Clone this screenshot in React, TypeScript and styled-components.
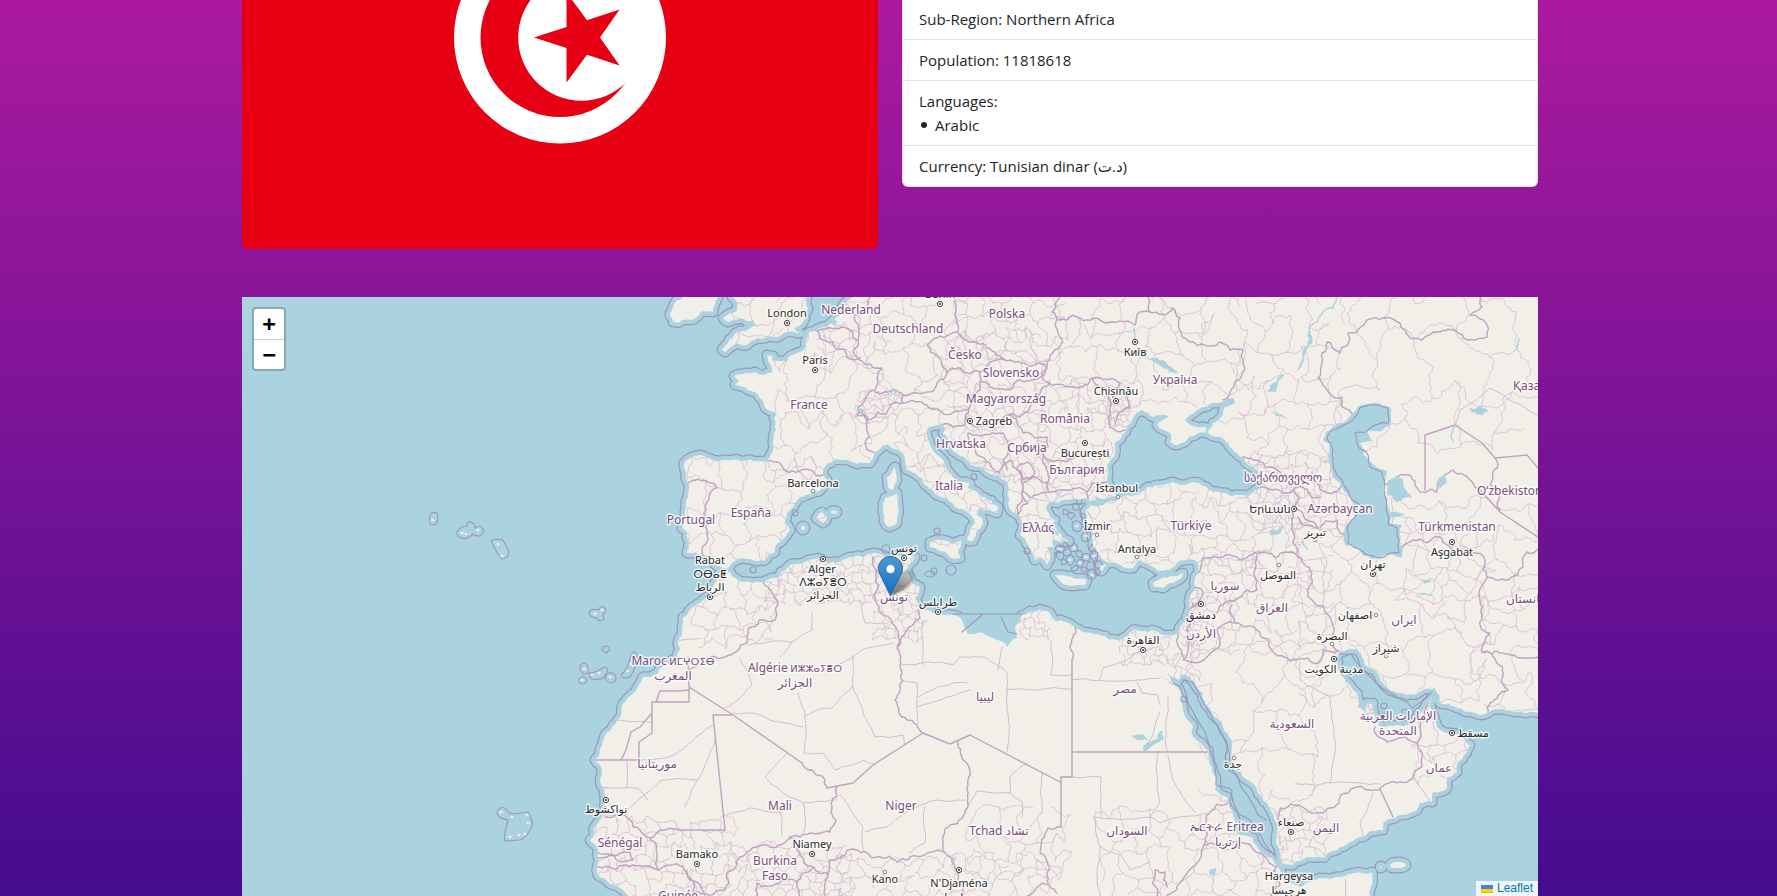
import React from 'react';
import styled, { createGlobalStyle } from 'styled-components';

const GlobalStyle = createGlobalStyle`
  *, *::before, *::after { box-sizing: border-box; }
  body {
    margin: 0;
    color: #212529;
    font-family: 'Segoe UI', 'Open Sans', 'DejaVu Sans', sans-serif;
    font-size: 15px;
    line-height: 24px;
  }
`;

const Page = styled.main`
  min-height: 100vh;
  padding-left: 3px;
  background: linear-gradient(#ab1a9e, #450c8f);
`;

const Container = styled.div`
  display: flex;
  flex-direction: column;
  gap: 48px;
  max-width: 1320px;
  margin: 0 auto;
  padding: 0 12px;
`;

const Columns = styled.section`
  display: grid;
  grid-template-columns: 1fr 1fr;
  gap: 24px;
  align-items: start;
`;

const Flag = styled.svg`
  display: block;
  width: 100%;
  border-radius: 0 0 6px 6px;
`;

const Facts = styled.ul`
  margin: 0;
  padding: 0;
  list-style: none;
  background: #fff;
  border: 1px solid #dee2e6;
  border-top: 0;
  border-radius: 0 0 6px 6px;
`;

const Fact = styled.li`
  padding: 8px 16px;
  & + & { border-top: 1px solid #dee2e6; }
  &:first-child { padding-top: 7px; }
`;

const Languages = styled.ul`
  margin: 0;
  padding: 0;
  list-style: none;
`;

const Language = styled.li`
  display: flex;
  align-items: center;
  gap: 8px;
  padding-left: 2px;
  &::before {
    content: '';
    width: 6px;
    height: 6px;
    border-radius: 50%;
    background: currentColor;
  }
`;

const MapFrame = styled.section`
  position: relative;
  overflow: hidden;
  background: #aad3df;
`;

const MapDrawing = styled.svg`
  display: block;
  width: 100%;
  font-family: 'Noto Sans', 'DejaVu Sans', sans-serif;
`;

const ZoomControl = styled.div`
  position: absolute;
  top: 10px;
  left: 10px;
  display: flex;
  flex-direction: column;
  border: 2px solid rgba(0, 0, 0, 0.2);
  border-radius: 4px;
  background: #fff;
  background-clip: padding-box;
`;

const ZoomButton = styled.button`
  width: 30px;
  height: 30px;
  padding: 0;
  border: 0;
  background: none;
  color: #000;
  font: bold 22px/28px 'DejaVu Sans Mono', monospace;
  cursor: pointer;
  & + & { border-top: 1px solid #ccc; }
`;

const Attribution = styled.div`
  position: absolute;
  right: 0;
  bottom: 0;
  padding: 0 5px;
  background: rgba(255, 255, 255, 0.8);
  font: 12px/15px 'Liberation Sans', Arial, sans-serif;
`;

const AttributionLink = styled.a`
  display: flex;
  align-items: center;
  gap: 4px;
  color: #0078a8;
  text-decoration: none;
`;

const Label = styled.text<{ $kind: 'country' | 'city' }>`
  font-size: ${(p) => (p.$kind === 'country' ? 12 : 11)}px;
  fill: ${(p) => (p.$kind === 'country' ? '#7a4f7c' : '#2b2b2b')};
  stroke: rgba(255, 255, 255, 0.75);
  stroke-width: 3px;
  stroke-linejoin: round;
  paint-order: stroke;
`;

const Tifinagh = styled.tspan`
  font-size: 10px;
`;

/* ---------- line work ---------- */

type Pt = [number, number];

const parse = (s: string): Pt[] =>
  s.trim().split(/\s+/).map((p) => p.split(',').map(Number) as Pt);

const noise = (x: number, y: number) => {
  const s = Math.sin(x * 12.9898 + y * 78.233) * 43758.5453;
  return s - Math.floor(s) - 0.5;
};

/* Roughens a segment; very long ones are frame edges and stay straight. */
const fracture = (a: Pt, b: Pt, amp: number): Pt[] => {
  const dx = b[0] - a[0];
  const dy = b[1] - a[1];
  const length = Math.hypot(dx, dy);
  if (amp === 0 || length < 4 || length > 180) return [b];
  const n = noise(a[0] + b[0], a[1] + b[1]) * amp;
  const mid: Pt = [(a[0] + b[0]) / 2 - dy * n, (a[1] + b[1]) / 2 + dx * n];
  return [...fracture(a, mid, amp), ...fracture(mid, b, amp)];
};

const line = (s: string | Pt[], amp = 0.4) => {
  const pts = typeof s === 'string' ? parse(s) : s;
  const out: Pt[] = [pts[0]];
  for (let i = 1; i < pts.length; i++) out.push(...fracture(pts[i - 1], pts[i], amp));
  return 'M' + out.map((p) => p[0].toFixed(1) + ' ' + p[1].toFixed(1)).join('L');
};

/* Irregular brick-like cells used for provinces and districts. */
const mesh = (x0: number, y0: number, x1: number, y1: number, cell: number) => {
  const node = (k: number, j: number): Pt => {
    const x = x0 + (k * cell) / 2;
    const y = y0 + j * cell * 0.85;
    return [x + noise(x, y) * cell * 0.5, y + noise(y, x) * cell * 0.75];
  };
  const cols = Math.round(((x1 - x0) / cell) * 2);
  const rows = Math.round((y1 - y0) / (cell * 0.85));
  let d = '';
  for (let j = 0; j <= rows; j++)
    for (let k = 0; k <= cols; k++) {
      if (k < cols && noise(k, j * 7 + x0) > -0.42) d += line([node(k, j), node(k + 1, j)], 0.5);
      if (j < rows && (k + j) % 2 === 0) d += line([node(k, j), node(k, j + 1)], 0.5);
    }
  return d;
};

const mainland = line(
  `853,290 853,297 843,305 840,315 832,322 827,327 817,329 808,333 806,340 806,347 797,353 788,358 787,362 773,361
  773,356 767,355 771,365 772,373 762,375 755,372 745,373 734,376 739,381 735,385 748,390 755,392 760,398 764,405
  768,410 777,413 774,418 776,430 773,440 772,453 768,461 753,461 733,460 707,458 700,455 690,458 684,463 686,472
  688,483 688,497 685,513 682,528 687,533 687,553 703,555 712,561 717,566 727,568 735,561 750,559 767,558 775,552
  778,543 785,537 790,530 785,523 787,513 795,503 813,493 823,487 827,480 823,472 828,463 843,460 857,464 870,463
  875,453 888,444 898,450 905,460 907,470 922,478 932,490 947,498 955,507 968,513 975,523 970,530 967,540 973,541
  978,530 983,523 982,518 977,515 980,507 990,510 997,513 998,507 983,497 968,488 970,483 958,482 950,473 945,463
  940,457 930,445 927,437 928,428 942,423 945,428 943,433 950,447 967,460 983,468 1000,477 1008,487 1008,503
  1015,513 1023,523 1020,535 1028,545 1032,552 1035,560 1040,557 1047,565 1050,553 1047,547 1055,548 1052,540
  1063,542 1058,532 1052,525 1055,520 1048,512 1046,507 1050,502 1058,503 1063,500 1073,498 1087,498 1090,502
  1097,498 1110,497 1117,496 1110,487 1107,478 1107,467 1114,457 1115,443 1122,435 1127,427 1133,418 1142,410
  1148,413 1153,417 1170,416 1160,422 1157,425 1170,433 1170,442 1178,445 1188,438 1205,433 1207,428 1190,425
  1185,420 1190,415 1203,407 1223,402 1233,398 1235,402 1225,407 1223,415 1213,423 1207,432 1217,437 1230,447
  1243,457 1257,470 1260,480 1258,490 1248,496 1240,495 1223,493 1210,490 1193,482 1173,482 1157,485 1140,493
  1123,496 1118,500 1103,505 1090,505 1085,512 1087,523 1092,533 1093,547 1100,555 1107,562 1120,565 1133,568
  1140,560 1153,567 1170,570 1185,560 1197,562 1198,573 1195,587 1190,607 1183,623 1178,633 1163,635 1152,630
  1133,630 1120,640 1100,635 1075,628 1055,621 1050,613 1030,611 1020,617 1015,627 1017,638 1007,647 997,640
  967,633 962,620 953,615 933,613 920,608 915,598 920,587 912,583 907,570 915,557 907,555 887,558 873,553
  853,557 823,560 803,563 787,568 777,578 763,582 750,582 733,577 727,571 720,573 715,583 710,596 700,603
  690,610 683,617 682,627 678,642 680,650 670,663 658,673 642,678 635,692 625,702 618,720 608,732 602,745
  595,760 602,770 603,787 605,803 600,820 593,837 590,840 597,847 598,857 597,868 600,877 613,885 623,890
  633,897 640,912 1370,912 1370,897 1372,872 1362,873 1340,877 1313,880 1300,887 1290,883 1283,877 1278,867
  1270,857 1257,847 1253,838 1237,833 1233,817 1227,797 1215,790 1213,773 1208,750 1193,737 1193,727 1183,710
  1173,683 1160,660 1157,653 1163,663 1178,680 1184,663 1182,675 1190,677 1203,693 1212,713 1227,733 1232,747
  1233,767 1252,783 1262,797 1272,813 1277,833 1278,847 1282,863 1293,865 1310,857 1337,850 1363,837 1383,830
  1383,823 1403,815 1417,810 1420,803 1432,802 1433,792 1447,788 1447,778 1457,772 1458,762 1470,745 1463,738
  1450,733 1437,727 1432,713 1433,695 1427,703 1417,717 1407,725 1380,727 1375,717 1373,703 1367,703 1365,712
  1358,707 1357,693 1343,677 1337,660 1340,652 1357,648 1368,667 1383,683 1407,695 1435,688 1440,703 1457,708
  1488,713 1517,712 1550,712 1550,290`,
  0.3,
) + 'Z';

const blob = (x: number, y: number, rx: number, ry = rx) =>
  `M${x - rx} ${y}a${rx} ${ry} 0 1 0 ${rx * 2} 0a${rx} ${ry} 0 1 0 ${-rx * 2} 0Z`;

const islands = [
  '807,290 807,297 808,308 805,318 802,324 794,328 800,333 773,337 753,340 747,345 737,343 725,352 722,350 733,337 740,331 757,325 753,320 728,322 723,318 737,310 738,303 732,297 732,290',
  '683,290 683,297 673,307 670,313 673,322 690,320 713,312 718,297 718,290',
  '895,467 887,477 888,487 893,490 897,480',
  '897,493 885,498 883,503 885,523 890,527 897,523 898,507',
  '816,518 822,512 827,518 823,523',
  '930,542 940,540 961,540 958,553 960,558 950,557 940,551 930,547',
  '1055,575 1062,575 1073,578 1087,580 1085,585 1060,581',
  '1153,583 1167,578 1183,573 1173,583 1163,588 1154,587',
  '1051,528 1058,532 1069,541 1064,540 1055,534',
  '1100,566 1106,564 1101,571',
].map((s) => line(s, 0.35) + 'Z').join('');

const islets = [[834, 512, 3, 1.5], [803, 528, 2, 2], [1398, 865, 8, 3], [1381, 867, 1, 1], [1393, 867, 2, 1]]
  .map(([x, y, a, b]) => blob(x, y, a, b)).join('');

const coast = mainland + islands + islets;

const aegeanRings = ([
  [1076, 507, 4], [1083, 516, 3], [1077, 526, 5], [1071, 516, 3], [1090, 524, 3], [1086, 536, 5], [1066, 512, 3],
  [1060, 549, 4], [1067, 553, 4], [1074, 548, 4], [1079, 554, 4], [1070, 560, 5], [1080, 563, 4], [1086, 557, 4],
  [1064, 562, 3], [1092, 548, 3], [1094, 556, 4], [1090, 565, 4], [1098, 564, 4], [1075, 568, 3], [1084, 570, 3],
  [1060, 556, 4], [1092, 575, 5], [1079, 501, 3], [1097, 572, 3], [1065, 545, 3],
] as [number, number, number][]).map(([x, y, r]) =>
  line(
    Array.from({ length: 9 }, (_, i): Pt => {
      const a = (i * Math.PI) / 4;
      const k = i % 8;
      return [x + Math.cos(a) * (r + noise(x + k, y) * 2), y + Math.sin(a) * (r + noise(x + k, y) * 2)];
    }),
    0.2,
  ) + 'Z',
);

/* Territorial-water rings of the small archipelagos. */
const archipelagoRings = [
  'M430 515q2-4 7-2q2 6-1 11q-6 3-7-3z',
  'M457 532q4-6 10-6q0-5 4-4q4 1 4 6q5-4 8 1q2 5-4 7q-5 0-6-2q-6 6-12 4q-5-2-4-6z',
  'M491 541q2-3 12-1l6 11q0 8-7 8q-3-2-11-18z',
  'M589 612q2-4 10-2q1-5 5-3q4 4-1 7l1 5q-3 4-8-1q-7-1-7-6z',
  'M602 650q1-6 7-3q2 3-3 6z',
  'M580 666q4-6 8 0q2 8-4 8q-4-2-4-8z',
  'M579 679q4-5 8 0q0 5-5 5q-4-1-3-5z',
  'M589 673q7 0 15-6q6 1 2 7q-3 6-8 5q-9 2-9-6z',
  'M605 678q4-9 10-3q3 6-3 8q-6 0-7-5z',
  'M621 675q7-6 10-20q3-6 6 0q0 12-7 22q-8 3-9-2z',
  'M497 812q4-7 9-3q3 5 8 5l14-2q5 8 4 14q-6 13-12 14l-15 1q-2-4 3-21q-12-2-11-8z',
  blob(924, 558, 3), blob(951, 570, 5), blob(930, 574, 5, 3), blob(934, 571, 3), blob(795, 513, 3), blob(753, 570, 3),
  blob(974, 477, 3), blob(1027, 551, 3), blob(1184, 699, 3), blob(937, 531, 3), blob(1384, 706, 3), blob(1384, 715, 2),
  blob(1405, 712, 3), blob(886, 549, 4),
];

const caspian = line(
  `1373,403 1390,407 1390,425 1367,432 1373,442 1360,443 1372,463 1387,472 1383,487 1388,507 1390,523 1402,525
  1402,557 1373,559 1357,548 1345,545 1345,527 1355,517 1353,503 1340,483 1330,463 1330,443 1323,440 1332,427
  1353,413 1363,405`,
  0.3,
) + 'Z';

const lakes = [
  '1388,483 1400,478 1403,488 1411,498 1397,502 1388,495',
  '1388,512 1404,514 1393,518', '1470,408 1480,406 1488,411 1482,415 1472,412', '1455,424 1453,442 1451,438',
  '1437,483 1444,477 1446,483 1440,488', '1270,531 1283,526 1278,534 1271,535', '1302,538 1308,550 1303,545',
  '1312,338 1308,346 1309,332', '1298,370 1304,359 1308,346',
  '1268,391 1276,382 1284,374 1277,386 1276,391', '1146,357 1160,361 1168,366 1178,372 1163,367',
  '1272,412 1282,415 1286,418', '1133,736 1140,735 1148,740 1138,740',
  '1144,752 1148,742 1158,739 1162,731 1163,739 1154,744', '1210,870 1216,868 1214,876 1210,874',
  '951,858 956,857 954,862', '837,322 828,324 832,318', '838,890 841,888 840,897',
  '858,410 864,410 862,413', '893,389 898,391 895,393', '1517,345 1519,338 1517,350',
  '1060,497 1070,493', '1423,580 1431,581 1424,583', '1419,594 1432,595',
].map((s) => line(s, 0.5) + 'Z').join('');

const rivers = line('1338,297 1333,308 1320,316 1312,325 1309,335', 0.4) + line('1134,328 1135,340', 0.2);

const nationalBorders = [
  '688,483 693,480 713,483 717,488 710,493 708,520 705,527 708,538 703,555',
  '768,461 783,468 797,472 823,475',
  '815,330 820,338 833,342 835,348 845,350 848,358 860,360 882,368 877,378 875,390 858,407 857,415 868,418 867,427 870,437 865,443 867,450 875,453',
  '817,331 827,328 843,327 853,332 853,338 858,340 853,352 860,358', '858,340 857,323 855,315 867,310 870,297',
  '875,392 895,390 903,395 917,393 935,388 937,383 947,373 930,352 927,345 945,337 958,332 957,320 955,297',
  '858,410 867,420 878,412 887,413 893,403 903,403 903,395',
  '903,403 927,405 942,412 960,411 970,407 972,395 980,390 980,382',
  '958,333 977,343 987,348 995,352 1005,360 1015,362 1040,363 1047,368',
  '947,373 952,368 960,368 980,372 990,362 1005,360',
  '980,372 980,382 990,387 1013,387 1020,380 1040,377 1047,367 1050,357 1063,342 1058,333 1057,318 1052,312 1060,297',
  '1058,320 1073,315 1087,320 1113,322 1135,325 1137,315 1150,312 1148,297',
  '1150,312 1173,308 1180,318 1180,330 1190,342 1220,342 1243,350 1243,360 1242,373 1233,388 1223,400',
  '1047,368 1042,375 1043,380 1073,387 1090,380 1092,378 1103,387 1110,400 1110,427 1125,430',
  '1092,378 1100,378 1120,383 1127,397 1130,408 1120,412 1115,425',
  '1050,383 1040,393 1030,407 1020,417 1008,415 993,428 977,427 965,417 970,407',
  '942,425 953,427 965,425 967,417', '968,433 1003,433 1008,442 1003,460 1007,470',
  '968,433 970,443 990,463 1000,472', '1008,415 1020,427 1023,433 1047,437 1048,447 1043,453 1047,460 1073,458 1090,453 1110,457',
  '1043,453 1045,465 1048,475 1048,482', '1022,483 1037,478 1048,482 1048,492 1030,498 1023,492 1022,483',
  '1027,462 1035,472 1023,480 1017,470 1027,462', '1000,470 1010,460 1018,470 1022,483 1023,497 1018,515',
  '1048,492 1065,490 1087,492 1088,500', '1087,492 1092,483 1107,482', '1023,497 1028,503 1018,515',
  '1260,487 1273,490 1293,490 1302,487', '1243,457 1273,467 1293,478 1317,483 1327,493 1343,483',
  '1293,490 1300,498 1295,507 1307,520 1317,527', '1302,487 1310,495 1320,497', '1293,510 1292,523 1293,543 1297,553',
  '1298,517 1317,528 1337,520 1340,533 1347,535',
  '1198,573 1203,558 1223,557 1240,560 1260,553 1290,552 1297,555 1312,573 1307,590 1312,600 1330,617 1332,640 1340,652',
  '1257,555 1257,590 1240,597 1217,613', '1232,605 1235,623 1217,630 1220,643 1200,662 1185,660',
  '1193,603 1190,620 1188,640 1183,660', '1178,633 1185,660', '1195,587 1203,592 1200,600 1193,607',
  '1235,623 1257,630 1297,660 1318,663 1323,650 1338,650',
  '1277,825 1280,808 1323,813 1340,797 1380,789 1413,777 1422,753 1417,743 1387,742 1375,727',
  '1417,743 1420,727 1428,703',
  '1400,550 1413,540 1440,537 1467,550 1485,560 1487,577 1480,600 1482,630 1490,633 1482,652 1503,675 1508,690 1490,703 1488,713',
  '1482,652 1523,658 1540,657', '1487,577 1507,580 1523,567 1527,552 1540,548',
  '1437,492 1438,483 1453,470 1473,483 1480,490', '1385,485 1405,475 1420,492 1437,492',
  '1495,458 1498,465 1490,485 1500,510',
  '1355,417 1342,407 1342,397 1325,387 1318,378 1322,353 1327,342 1340,353 1348,333 1367,320 1397,322 1408,335 1422,340 1433,332 1453,330 1467,340 1487,337 1488,327 1470,315 1482,307 1480,297',
  '763,582 768,587 775,620 748,630 747,643 725,657 700,660 689,670',
  '873,557 878,585 875,600 892,623 897,648 900,660 895,700 907,720 923,733', '897,648 907,630 920,618 918,610',
  '605,817 630,820 640,830 650,838 660,830 683,830', '650,838 657,857 658,870 633,865 598,867',
  '598,853 618,855 630,852 633,860 615,857 598,858', '658,870 683,867 690,880 700,885 705,897',
  '837,787 836,820 830,832 790,837 757,847 740,857 727,873 725,890 693,892 687,870',
  '790,837 800,855 813,867 828,875 830,860 847,850 880,857 897,862 943,852', '757,897 757,883 797,883 813,868',
  '828,875 826,897', '797,883 800,897', '958,742 962,757 970,772 965,813 943,843 945,853 958,880 963,897',
  '1075,628 1070,647 1072,660', '1061,827 1048,828 1040,853 1048,883', '1027,896 1043,883 1057,893',
  '1228,802 1210,812 1205,843 1197,863 1180,883 1167,895', '1205,845 1243,843 1260,853 1277,867',
  '1157,896 1155,870 1165,872 1167,887', '1277,867 1270,873 1280,885 1270,897', '802,763 808,770 825,780 827,788',
].map((s) => line(s)).join('');

const straightBorders = [
  '688,657 689,687 733,715 802,763', '827,788 853,783 873,765 923,733 950,744 970,735 1060,782',
  '689,688 689,702 652,702 652,733 639,742 639,760 593,760', '689,690 678,691 660,691 656,702',
  '652,713 640,727 631,732 626,750 621,760', '733,715 713,715 725,830 683,830',
  '1072,660 1072,777 1061,777 1061,827', '1072,752 1210,752', '1380,789 1393,817',
  '1425,490 1425,435 1455,425 1482,443', '1482,443 1495,458 1527,455 1538,468', '1480,490 1500,512 1538,537',
].map((s) => line(s, 0)).join('');

const provinceLines = [
  '812,613 812,630 792,642 780,657', '792,642 748,645', '893,643 862,650 842,663 820,672', '853,655 853,688',
  '798,693 804,710 804,753 823,753 835,770 863,760 875,765', '804,717 823,708 832,708 852,687 862,707 875,737 903,735 905,745',
  '733,713 750,713 803,727', '740,658 752,685 725,708', '713,725 667,758 640,760', '715,740 685,807',
  '697,780 662,780 627,810', '627,762 627,788 603,788', '627,788 638,788 648,800', '787,753 765,777 780,790 803,803 837,800',
  '727,815 750,808 780,812 782,835', '803,803 804,833', '840,795 863,827 863,850', '865,832 887,827 913,808 937,800 965,800',
  '925,807 925,843 910,853', '902,665 953,665 960,657 987,658 1007,672 1007,752', '923,620 923,665', '902,680 917,683 918,723',
  '1007,689 1072,689', '1051,640 1051,675 1072,675', '1002,647 998,670', '918,697 938,687 967,683', '917,707 947,697 970,690',
  '1072,680 1137,680 1160,678', '1099,680 1103,668 1127,660 1143,650', '1168,697 1168,752', '1160,712 1143,752',
  '1060,777 1101,777 1101,817', '1094,817 1150,817 1160,823 1207,813', '1094,817 1100,847 1097,870 1100,896',
  '1158,752 1157,788 1160,802 1150,817', '1168,755 1173,780 1187,803 1195,812', '1027,763 1010,777 1010,793 977,791 965,813',
  '1042,773 1042,813 1030,827', '1010,793 1022,802 1022,817', '1300,662 1300,680 1330,697 1335,753 1330,783',
  '1295,784 1380,784', '1413,777 1430,802', '1373,793 1360,823 1363,837', '618,720 652,722', '677,640 700,638',
  '1175,668 1181,656', '1137,682 1142,693 1158,695 1160,705', '1345,879 1346,897', '1455,425 1460,410 1490,388 1538,415',
  '980,615 985,625 987,635', '1100,847 1120,855 1130,870 1150,862', '860,600 865,623 888,624',
].map((s) => line(s, 0.12)).join('');

const districts = [
  mesh(690, 460, 830, 560, 30), mesh(772, 335, 880, 462, 32), mesh(858, 392, 900, 418, 9), mesh(872, 297, 957, 392, 30),
  mesh(895, 410, 945, 470, 22), mesh(905, 460, 1000, 545, 20), mesh(820, 328, 858, 350, 14), mesh(815, 297, 870, 320, 16),
  mesh(958, 297, 1060, 362, 24), mesh(945, 335, 1045, 412, 22), mesh(1040, 385, 1112, 458, 17), mesh(1108, 385, 1128, 425, 6),
  mesh(955, 412, 1045, 480, 18), mesh(1045, 458, 1110, 490, 14), mesh(1008, 480, 1060, 560, 20), mesh(1060, 297, 1245, 400, 34),
  mesh(1245, 297, 1345, 460, 32), mesh(1345, 297, 1540, 420, 54), mesh(1090, 485, 1300, 565, 19), mesh(1250, 455, 1345, 530, 12),
  mesh(1197, 560, 1255, 610, 17), mesh(1255, 553, 1330, 655, 22), mesh(1190, 600, 1240, 660, 16), mesh(1300, 525, 1480, 700, 34),
  mesh(1400, 500, 1540, 600, 42), mesh(1480, 590, 1540, 710, 36), mesh(1195, 650, 1330, 790, 44), mesh(1280, 810, 1325, 865, 12),
  mesh(1415, 720, 1470, 780, 22), mesh(1365, 700, 1380, 722, 5), mesh(1420, 695, 1434, 720, 5), mesh(695, 575, 775, 650, 20),
  mesh(765, 555, 880, 605, 11), mesh(875, 555, 925, 640, 11), mesh(1120, 632, 1170, 660, 9), mesh(1180, 590, 1200, 645, 8),
  mesh(1020, 612, 1050, 640, 10), mesh(598, 820, 730, 900, 15), mesh(730, 845, 850, 900, 14), mesh(840, 860, 1060, 900, 20),
  mesh(970, 815, 1060, 880, 24), mesh(1100, 815, 1280, 900, 24), mesh(1165, 655, 1200, 680, 14), mesh(730, 297, 808, 345, 26),
].join('');

const seaBorders =
  line('1173,683 1180,687 1196,718 1205,732 1214,762 1216,785 1232,790 1230,803 1240,815 1250,820 1262,838 1276,858', 0.1) +
  line('1182,680 1192,682 1203,702 1220,730 1228,748 1230,765 1243,790 1258,815 1266,820', 0.1) +
  line('1340,654 1352,655 1375,682 1407,702 1412,708 1432,692', 0.1);

const caspianBorders =
  line('1355,417 1342,426 1332,430 1327,438 1333,450 1333,463 1343,482 1352,500 1370,507', 0.2) +
  line(
    '1355,417 1360,408 1373,405 1387,407 1388,423 1372,427 1366,432 1355,433 1358,447 1368,455 1370,467 1382,472 1384,490 1386,510 1389,525 1397,528 1399,553 1380,558 1360,550 1348,543 1347,528 1357,515',
    0.2,
  );

/* ---------- labels ---------- */

type Place = [string, number, number, ('start' | 'middle')?, string?];

const countries: Place[] = [
  ['Nederland', 851, 314], ['Deutschland', 908, 333], ['France', 809, 409], ['España', 751, 517], ['Portugal', 691, 524],
  ['Polska', 1007, 318], ['Česko', 965, 359], ['Slovensko', 1011, 377], ['Magyarország', 1006, 403], ['România', 1065, 423],
  ['Україна', 1175, 384], ['Hrvatska', 961, 448], ['Србија', 1027, 452], ['България', 1077, 474], ['Italia', 949, 490],
  ['Ελλάς', 1038, 532], ['Türkiye', 1191, 530], ['سوريا', 1225, 590], ['Қазақстан', 1513, 390, 'start'],
  ['საქართველო', 1283, 482], ['Azərbaycan', 1340, 513], ['Oʻzbekiston', 1477, 495, 'start'], ['Türkmenistan', 1457, 531],
  ['افغانستان', 1506, 603, 'start'], ['العراق', 1272, 612], ['ایران', 1404, 624], ['السعودية', 1292, 728],
  ['الإمارات العربية', 1398, 720], ['المتحدة', 1398, 735], ['عمان', 1439, 772], ['اليمن', 1326, 832], ['الأردن', 1201, 638],
  ['مصر', 1125, 693], ['ليبيا', 985, 701], ['Tchad تشاد', 999, 835], ['السودان', 1127, 835], ['ኤርትራ Eritrea', 1227, 831],
  ['إرتريا', 1228, 846], ['Maroc', 673, 665, 'middle', 'ⵍⵎⵖⵔⵉⴱ'], ['المغرب', 673, 680],
  ['Algérie', 795, 672, 'middle', 'ⵍⵣⵣⴰⵢⴻⵔ'], ['الجزائر', 795, 687], ['موريتانيا', 657, 768], ['Sénégal', 620, 847],
  ['Mali', 780, 810], ['Niger', 901, 810], ['Burkina', 775, 865], ['Faso', 775, 880], ['تونس', 894, 601],
  ['Guinée', 678, 900],
];

const cities: Place[] = [
  ['London', 787, 317], ['Berlin', 940, 298], ['Paris', 815, 364], ['Barcelona', 813, 487], ['Rabat', 710, 564],
  ['ⵔⴱⴰⵟ', 710, 578], ['الرباط', 710, 591], ['Alger', 822, 573], ['ⴷⵣⴰⵢⴻⵔ', 823, 586], ['الجزائر', 823, 599],
  ['تونس', 904, 552], ['طرابلس', 938, 606], ['Zagreb', 994, 425], ['Chișinău', 1116, 395], ['Київ', 1135, 356],
  ['București', 1085, 457], ['İstanbul', 1117, 492], ['İzmir', 1097, 530], ['Antalya', 1137, 553], ['Երևան', 1270, 513],
  ['تبریز', 1315, 536], ['Aşgabat', 1452, 556], ['تهران', 1373, 568], ['الموصل', 1278, 579], ['اصفهان', 1355, 619],
  ['البصرة', 1332, 640], ['شیراز', 1386, 652], ['مدينة الكويت', 1334, 673], ['مسقط', 1473, 737], ['صنعاء', 1291, 826],
  ['Hargeysa', 1289, 880], ['هرجيسا', 1289, 894], ['دمشق', 1201, 619], ['القاهرة', 1143, 644], ['جدة', 1233, 768],
  ['نواكشوط', 606, 813], ['Bamako', 697, 858], ['Niamey', 812, 848], ['Kano', 885, 883], ["N'Djaména", 959, 887],
  ['نجامينا', 959, 901],
];

const capitals: Pt[] = [
  [787, 323], [940, 304], [815, 370], [710, 597], [823, 559], [904, 558], [938, 612], [970, 421], [1116, 401],
  [1135, 342], [1085, 443], [1294, 509], [1452, 542], [1373, 574], [1334, 659], [1452, 733], [1291, 832], [1201, 604],
  [1143, 650], [606, 800], [697, 864], [812, 854], [959, 870],
];

const towns: Pt[] = [
  [813, 491], [1118, 497], [1097, 535], [1137, 557], [1315, 540], [1279, 565], [1376, 615], [1332, 644], [1386, 656],
  [1234, 758], [885, 872],
];

const specks: Pt[] = [
  [433, 520], [462, 533], [466, 534], [478, 530], [498, 544], [502, 556], [595, 614], [602, 610], [584, 669],
  [582, 680], [592, 675], [599, 673], [610, 677], [628, 671], [631, 664], [501, 812], [512, 817], [527, 815],
  [528, 823], [510, 837], [519, 835], [525, 834], [1077, 526], [1086, 536], [1060, 549], [1074, 548], [1070, 560],
  [1086, 557], [1094, 556], [1092, 575], [1080, 563],
];

const Labels = ({ places, kind }: { places: Place[]; kind: 'country' | 'city' }) => (
  <>
    {places.map(([name, x, y, anchor = 'middle', berber]) => (
      <Label key={`${name}-${x}`} $kind={kind} x={x} y={y} textAnchor={anchor}>
        {name}
        {berber && <Tifinagh> {berber}</Tifinagh>}
      </Label>
    ))}
  </>
);

const WorldMap = () => (
  <MapDrawing viewBox="242 297 1296 599" role="img" aria-label="Map centred on Tunisia">
    <defs>
      <clipPath id="land">
        <path d={mainland + islands} />
      </clipPath>
      <linearGradient id="pin" x1="0" y1="0" x2="0" y2="1">
        <stop offset="0" stopColor="#4a9bd4" />
        <stop offset="1" stopColor="#126fc6" />
      </linearGradient>
      <linearGradient id="shadow" x1="0" y1="1" x2="1" y2="0">
        <stop offset="0" stopColor="#000" stopOpacity="0.6" />
        <stop offset="1" stopColor="#000" stopOpacity="0.1" />
      </linearGradient>
      <filter id="soft" x="-30%" y="-30%" width="160%" height="160%">
        <feGaussianBlur stdDeviation="1.2" />
      </filter>
    </defs>
    <g strokeLinejoin="round" strokeLinecap="round">
      <path d={coast} fill="#9a97bb" stroke="#9a97bb" strokeWidth="11" />
      <path d={coast} fill="#aad3df" stroke="#aad3df" strokeWidth="8.6" />
      <path d="M957 613L962 622 967 633 997 640 1007 647 1017 638 1015 627 1022 613Z" fill="#aad3df" />
      <g fill="none" stroke="#9a97bb" strokeWidth="1.1">
        {aegeanRings.map((d) => (
          <path key={d} d={d} />
        ))}
      </g>
      <path d={coast} fill="#f2efe9" />
      <g fill="none" stroke="#9a97bb" strokeWidth="1.1">
        {archipelagoRings.map((d) => (
          <path key={d} d={d} />
        ))}
        <path d="M953 614H1022M982 615l-20 17M1001 617l7 15 9 2" />
      </g>
      {specks.map(([x, y]) => (
        <ellipse key={`${x}-${y}`} cx={x} cy={y} rx="1.6" ry="1.2" fill="#f2efe9" />
      ))}
      <g clipPath="url(#land)" fill="none">
        <path d={districts} stroke="#d6c3d5" strokeWidth="0.9" />
        <path d={provinceLines} stroke="#d0bbd0" strokeWidth="1" />
        <path d={nationalBorders} stroke="#bfa3bf" strokeWidth="1.4" />
        <path d={straightBorders} stroke="#bfa3bf" strokeWidth="1.4" />
        <path d={lakes} fill="#aad3df" stroke="#aad3df" strokeWidth="0.8" />
        <path d={rivers} stroke="#aad3df" strokeWidth="1.4" />
        <path d={caspian} fill="#aad3df" />
        <path d={caspianBorders} stroke="#9a97bb" strokeWidth="1.1" />
      </g>
      <path d={seaBorders} fill="none" stroke="#9a97bb" strokeWidth="1.1" />
    </g>
    {capitals.map(([x, y]) => (
      <g key={`${x}-${y}`}>
        <circle cx={x} cy={y} r="2.6" fill="#fff" stroke="#444" strokeWidth="1" />
        <circle cx={x} cy={y} r="1.1" fill="#333" />
      </g>
    ))}
    {towns.map(([x, y]) => (
      <circle key={`${x}-${y}`} cx={x} cy={y} r="1.8" fill="#fff" stroke="#777" strokeWidth="0.9" />
    ))}
    <Labels places={countries} kind="country" />
    <Labels places={cities} kind="city" />
    <path d="M891 596L899 578Q906 566 913 572Q917 579 907 588Z" fill="url(#shadow)" filter="url(#soft)" />
    <g transform="translate(878 556)">
      <path
        d="M12.5.5C5.8.5.5 5.8.5 12.4c0 2.8.8 5 2.3 7.6L12.5 40l9.7-20c1.5-2.6 2.3-4.8 2.3-7.600C24.5 5.8 19.2.5 12.5.5Z"
        fill="url(#pin)"
        stroke="#2e6c97"
        strokeWidth="1"
      />
      <circle cx="12.5" cy="13" r="4.5" fill="#fff" stroke="#2e6c97" strokeWidth="0.6" />
    </g>
  </MapDrawing>
);

const App = () => (
  <>
    <GlobalStyle />
    <Page>
      <Container>
        <Columns>
          <Flag viewBox="242 0 636 249" role="img" aria-label="Flag of Tunisia">
            <rect x="242" width="636" height="249" fill="#e70013" />
            <circle cx="560" cy="37.5" r="106" fill="#fff" />
            <circle cx="560" cy="37.5" r="79.5" fill="#e70013" />
            <circle cx="581.5" cy="37.5" r="63.3" fill="#fff" />
            <path
              d="M534 37.5L566.5 27V-7.5L587 20.2L619.6 9.5L600 37.5L619.6 65.5L587 54.8L566.5 82.5V48Z"
              fill="#e70013"
            />
          </Flag>
          <Facts>
            <Fact>Sub-Region: Northern Africa</Fact>
            <Fact>Population: 11818618</Fact>
            <Fact>
              Languages:
              <Languages>
                <Language>Arabic</Language>
              </Languages>
            </Fact>
            <Fact>Currency: Tunisian dinar (د.ت)</Fact>
          </Facts>
        </Columns>
        <MapFrame>
          <WorldMap />
          <ZoomControl>
            <ZoomButton type="button" aria-label="Zoom in">+</ZoomButton>
            <ZoomButton type="button" aria-label="Zoom out">−</ZoomButton>
          </ZoomControl>
          <Attribution>
            <AttributionLink href="#leaflet">
              <svg width="12" height="8" viewBox="0 0 12 8" aria-hidden="true">
                <path fill="#4c7be1" d="M0 0h12v4H0z" />
                <path fill="#ffd500" d="M0 4h12v3H0z" />
                <path fill="#e0bc00" d="M0 7h12v1H0z" />
              </svg>
              Leaflet
            </AttributionLink>
          </Attribution>
        </MapFrame>
      </Container>
    </Page>
  </>
);

export default App;
